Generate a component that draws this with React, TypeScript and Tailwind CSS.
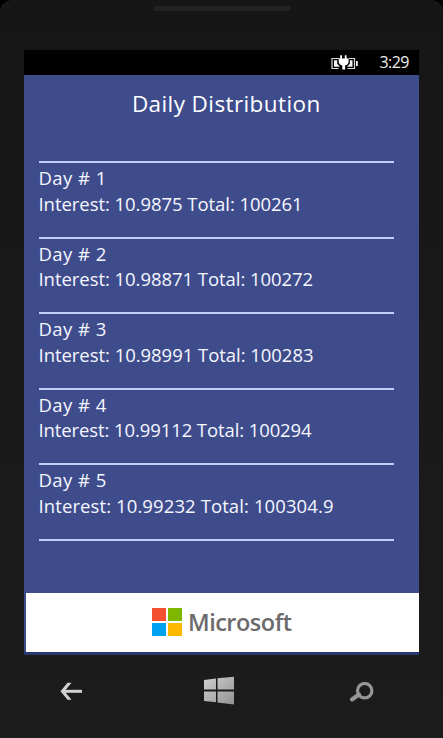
interface DayEntry {
  day: number;
  interest: string;
  total: string;
  spacing: string;
}

const days: DayEntry[] = [
  { day: 1, interest: "10.9875", total: "100261", spacing: "tracking-[-0.05px]" },
  { day: 2, interest: "10.98871", total: "100272", spacing: "tracking-[-0.05px]" },
  { day: 3, interest: "10.98991", total: "100283", spacing: "tracking-[-0.04px]" },
  { day: 4, interest: "10.99112", total: "100294", spacing: "tracking-[-0.1px]" },
  { day: 5, interest: "10.99232", total: "100304.9", spacing: "tracking-[0.1px]" },
];

function BatteryIcon() {
  return (
    <svg width="27" height="15" viewBox="0 0 27 15" fill="none">
      <path d="M8 3.500H1V13.500H7.500M17.500 3.500H23.500V13.500H16.500" stroke="#d8d8d8" strokeWidth="1.200" />
      <path d="M25 6h1.800v5H25z" fill="#f4f4f4" />
      <path d="M3 5.300h3.200v3.500L9 11.800H3zM21.500 5.300h-2.700v3.500L16 11.800h5.500z" fill="#f0f0f0" />
      <path
        d="M9.200 .3H11v3.200h2.800V.3h1.800v3.200h2v3.200c0 2-1.500 3.300-3.500 3.700V14.500h-2.800v-4.100c-2-.4-3.600-1.700-3.600-3.700V3.500h1.500z"
        fill="#ffffff"
      />
    </svg>
  );
}

function StatusBar() {
  return (
    <div className="flex h-[25px] items-center justify-end bg-black pr-[8px] text-[#f0f0f0]">
      <BatteryIcon />
      <span className="ml-[22px] w-[31px] text-[16px] leading-[25px] tracking-[-0.6px] whitespace-nowrap">3:29</span>
    </div>
  );
}

function DayRow({ day, interest, total, spacing }: DayEntry) {
  return (
    <li className="h-[75.5px] border-t-2 border-[#c3cffa] pt-[2px] text-[18.5px] leading-[25.5px] whitespace-nowrap">
      <p className="tracking-[0.45px]">Day # {day}</p>
      <p className={spacing}>
        Interest: {interest} Total: {total}
      </p>
    </li>
  );
}

function Footer() {
  return (
    <div className="ml-[2px] flex h-[59px] items-center bg-white pb-[2px] pl-[126px]">
      <div className="grid grid-cols-2 gap-[2px]">
        <span className="h-[13px] w-[14px] bg-[#f25030]" />
        <span className="h-[13px] w-[14px] bg-[#7db700]" />
        <span className="h-[13px] w-[14px] bg-[#00a1f1]" />
        <span className="h-[13px] w-[14px] bg-[#fdb900]" />
      </div>
      <span className="ml-[6px] text-[23.5px] leading-[28px] font-semibold tracking-[-0.5px] text-[#6b6b6b]">
        Microsoft
      </span>
    </div>
  );
}

function NavButtons() {
  return (
    <div className="flex h-[83px] items-start pt-[21px]">
      <svg className="mt-[6px] ml-[60px]" width="23" height="19" viewBox="0 0 23 19" fill="none">
        <path d="M2.500 9.300H22" stroke="#d2d2d2" strokeWidth="3" />
        <path d="M11.500 .8H7.500L0.500 9.300 7.500 17.800H11.500L4.500 9.300z" fill="#d2d2d2" />
      </svg>
      <svg className="ml-[120px]" width="32" height="29" viewBox="0 0 32 29">
        <defs>
          <linearGradient id="metal" x1="0" y1="0" x2="1" y2="1">
            <stop offset="0" stopColor="#d0d0d0" />
            <stop offset="1" stopColor="#929292" />
          </linearGradient>
        </defs>
        <path
          d="M1 4 13 2.500V13.500H1zM14.500 2.300 31 .8V13.500H14.500zM1 15.500H13V26.300L1 25zM14.500 15.500H31V28.500L14.500 26.500z"
          fill="url(#metal)"
        />
      </svg>
      <svg className="mt-[6px] ml-[114px]" width="25" height="20" viewBox="0 0 25 20" fill="none">
        <circle cx="15.700" cy="8.700" r="7.200" stroke="#969696" strokeWidth="3.200" />
        <path d="M10 12.500 3 17.500" stroke="#969696" strokeWidth="4" strokeLinecap="round" />
      </svg>
    </div>
  );
}

export default function App() {
  return (
    <div className="h-[738px] w-[443px] overflow-hidden bg-black font-['Open_Sans','Noto_Sans',sans-serif]">
      <div className="flex h-full flex-col rounded-t-[12px] bg-linear-to-b from-[#161616] to-[#1c1c1c]">
        <div className="flex h-[50px] shrink-0 justify-center pt-[6px]">
          <div className="h-[5px] w-[138px] rounded-full bg-[#222222]" />
        </div>
        <div className="ml-[24px] flex h-[605px] w-[394.5px] shrink-0 flex-col bg-[#3f4c8c]">
          <StatusBar />
          <h1 className="mt-[13px] pl-[10px] text-center text-[22.5px] leading-[32px] font-normal tracking-[0.4px] text-white">
            Daily Distribution
          </h1>
          <ul className="mt-[41px] ml-[14.5px] w-[355px] border-b-2 border-[#c3cffa] text-[#f5f7ff]">
            {days.map((entry) => (
              <DayRow key={entry.day} {...entry} />
            ))}
          </ul>
          <div className="mt-auto border-b-[3px] border-[#2a376f]">
            <Footer />
          </div>
        </div>
        <NavButtons />
      </div>
    </div>
  );
}
